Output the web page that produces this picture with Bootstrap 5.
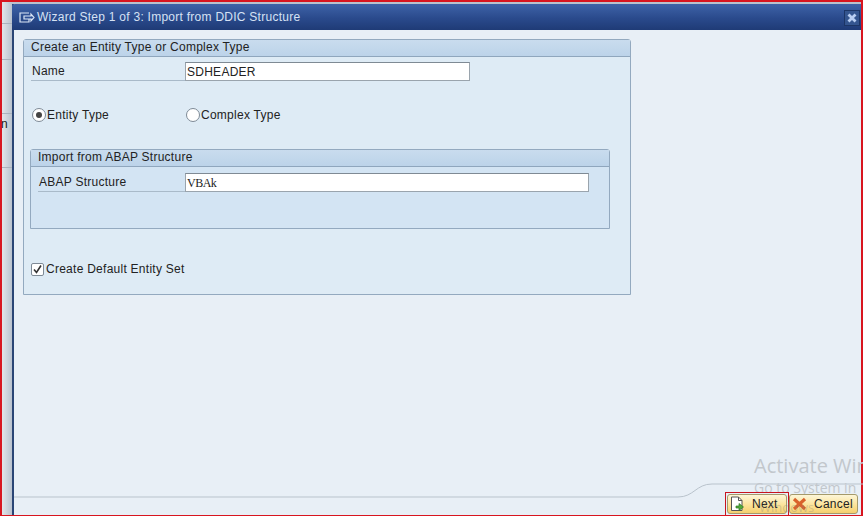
<!DOCTYPE html>
<html lang="en">
<head>
<meta charset="utf-8">
<title>Wizard Step 1 of 3</title>
<link href="https://cdn.jsdelivr.net/npm/bootstrap@5.3.0/dist/css/bootstrap.min.css" rel="stylesheet">
<style>
html,body{height:516px;overflow:hidden}
body{background:#d3d8df;font-family:"Liberation Sans",sans-serif;font-size:12px;letter-spacing:.26px;color:#222;margin:0}
.frame{height:516px;width:863px;border-top:2px solid #d8151f;border-left:2px solid #d8151f;border-right:2px solid #d8151f;border-bottom:1px solid #d8151f;padding:2px 0 0 10px;position:relative;background:linear-gradient(90deg,#e2e5e9,#b9c2ce 10px,#b9c2ce 10px) no-repeat;background-color:#d3d8df}
.sidebit{position:absolute;left:0;width:10px;border-top:1px solid #aab2bd}
.sidechar{position:absolute;left:-1px;top:115px;font-size:12px;line-height:14px}
.dlg{height:100%;border-left:2px solid #2a4575;background:#e8eff6;position:relative;display:flex;flex-direction:column}
.titlebar{height:26px;background:linear-gradient(#3e63a8,#2a4a8c 55%,#1f3b76);color:#d6e2f4;gap:2px;font-size:12px;margin-left:-2px;border-top-left-radius:3px;padding-left:7px}
.closebox{width:16px;height:16px;border:1px solid #1c3566;background:#34558f;margin-left:auto;margin-right:1px;margin-top:1px}
.dlgbody{flex:1;padding:9px 0 0 9px}
.grp{border:1px solid #93a9bf;border-radius:3px 3px 0 0;background:#deebf5}
.grphead{height:17px;line-height:15px;background:linear-gradient(#c9dcee,#bcd3e9);border-bottom:1px solid #8fa6bd;padding-left:7px;color:#222}
.outergrp{width:608px;height:256px}
.innergrp{width:580px;height:80px;background:#d3e4f3;margin:0 0 0 6px}
.fieldrow{height:23px;margin-top:3px}
.fieldrow.inner-field{margin-top:4px}
.lbl{width:154px;margin-left:7px;padding-left:1px;border-bottom:1px solid #a9bac9;height:19px;line-height:19px;flex:none}
.inner-field .lbl{width:147px}
.txt{background:#fff;border:1px solid #9aa4ad;border-top-color:#7f8a94;height:19px;line-height:19px;padding-left:1px;color:#222;flex:none}
.w1{width:285px}
.w2{width:404px;font-family:"Liberation Serif",serif;font-size:12px;letter-spacing:-.5px}
.radio{width:14px;height:14px;border-radius:50%;background:#fff;border:1px solid #7e8a96;flex:none;display:flex;align-items:center;justify-content:center;margin-right:1px}
.radio i{display:block;width:6px;height:6px;border-radius:50%;background:#444}
.radiorow{margin:22px 0 0 8px;height:20px}
.radioitem{width:154px}
.checkrow{margin:30px 0 0 7px;height:20px;gap:2px}
.chk{width:13px;height:13px;border:1px solid #7e8a96;background:#fff;border-radius:2px;flex:none}
.wrapper2{margin-top:24px}
.foot{height:18px;position:relative}
.curve{position:absolute;left:0;top:-14px;width:849px;height:16px}
.wm{position:absolute;left:740px;color:#c2c7cc;white-space:nowrap;font-family:"Open Sans",sans-serif;letter-spacing:0}
.wm1{top:-43px;font-size:20px;line-height:24px;width:109px}
.wm2{top:-17px;font-size:14px;line-height:16px}
.wm3{top:2px;font-size:13px;line-height:16px;left:745px;z-index:3;color:rgba(120,125,130,.3)}
.footbtns{position:absolute;top:-3px;left:713px;gap:2px}
.sapbtn{height:20px;border:1px solid #a59a6a;border-radius:3px;background:linear-gradient(#fdf6d8,#fbe39a 55%,#f5cf6e);color:#222;line-height:18px;padding:0 0 0 2px;font-size:12px}
.nextbtn{width:60px;position:relative}
.nextbtn::before{content:"";position:absolute;left:-3px;right:-3px;top:-3px;bottom:-2px;border:1px solid #c8141e;border-bottom:0}
.cancelbtn{width:69px}
.btnlabel{margin-left:7px}
</style>
</head>
<body>
<div class="frame">
<div class="sidebit" style="top:21px"></div>
<div class="sidebit" style="top:57px"></div>
<div class="sidebit" style="top:111px"></div>
<div class="sidebit" style="top:165px"></div>
<div class="sidechar">n</div>
<div class="dlg">
<div class="titlebar d-flex align-items-center">
<svg width="16" height="13" viewBox="0 0 16 13" fill="none" stroke="#dbe6f6" stroke-width="1.2"><path d="M10 2H1v9h9V8"/><path d="M5 5h7V3l3 3.500L12 10V8H5z" fill="#2f5096"/></svg>
<span>Wizard Step 1 of 3: Import from DDIC Structure</span>
<div class="closebox d-flex align-items-center justify-content-center"><svg width="12" height="12" viewBox="0 0 12 12"><path d="M2.500 2.500l7 7M9.500 2.500l-7 7" stroke="#b9cef2" stroke-width="2.800"/></svg></div>
</div>
<div class="dlgbody">
<div class="grp outergrp">
<div class="grphead">Create an Entity Type or Complex Type</div>
<div class="fieldrow d-flex align-items-center">
<div class="lbl">Name</div><div class="txt w1">SDHEADER</div>
</div>
<div class="radiorow d-flex align-items-center">
<div class="radioitem d-flex align-items-center"><span class="radio"><i></i></span><span>Entity Type</span></div>
<div class="radioitem d-flex align-items-center"><span class="radio"></span><span>Complex Type</span></div>
</div>
<div class="grp innergrp wrapper2">
<div class="grphead">Import from ABAP Structure</div>
<div class="fieldrow inner-field d-flex align-items-center">
<div class="lbl">ABAP Structure</div><div class="txt w2">VBAk</div>
</div>
</div>
<div class="checkrow d-flex align-items-center">
<span class="chk d-flex align-items-center justify-content-center"><svg width="11" height="11" viewBox="0 0 11 11"><path d="M2 5.500l2.500 3L9 1.500" fill="none" stroke="#333" stroke-width="1.600"/></svg></span><span>Create Default Entity Set</span>
</div>
</div>
</div>
<div class="foot">
<svg class="curve" viewBox="0 0 849 16"><path d="M0 14H664C680 14 682 1 698 1H849" fill="none" stroke="#b9c3cc"/></svg>
<div class="wm wm1">Activate Win</div>
<div class="wm wm2">Go to System in</div>
<div class="footbtns d-flex">
<div class="sapbtn nextbtn d-flex align-items-center">
<svg width="15" height="16" viewBox="0 0 15 16"><path d="M1.500 1h7l3.500 3.500V14.500h-10.500z" fill="#fff" stroke="#555"/><path d="M8.500 1v3.500h3.500" fill="none" stroke="#555"/><path d="M6 10h3V7.500l4.500 3.500L9 14.500V12H6z" fill="#4fa83a" stroke="#2f7a25" stroke-width=".7"/></svg>
<span class="btnlabel">Next</span>
</div>
<div class="sapbtn cancelbtn d-flex align-items-center">
<svg width="15" height="14" viewBox="0 0 15 14"><path d="M2 2l11 10M13 2L2 12" stroke="#d9622b" stroke-width="3.200"/></svg>
<span class="btnlabel">Cancel</span>
</div>
</div>
<div class="wm wm3">Windows</div>
</div>
</div>
</div>
<script src="https://cdn.jsdelivr.net/npm/bootstrap@5.3.0/dist/js/bootstrap.bundle.min.js"></script>
</body>
</html>
